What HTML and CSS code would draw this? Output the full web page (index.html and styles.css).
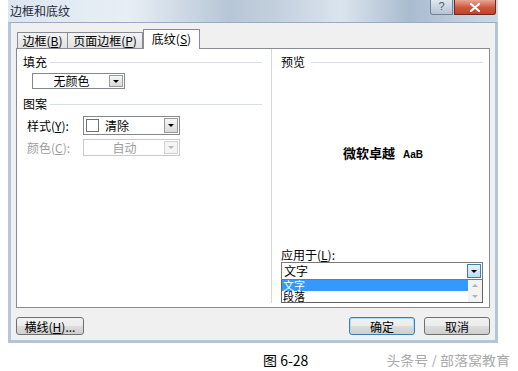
FILE: index.html
```html
<!DOCTYPE html>
<html lang="zh-CN">
<head>
  <meta charset="UTF-8" />
  <meta name="viewport" content="width=device-width, initial-scale=1.0"/>
  <title>边框和底纹</title>
  <link rel="stylesheet" href="styles.css">
</head>
<body>

  <div class="window">
    <!-- Title bar -->
    <div class="titlebar">
      <span class="title">边框和底纹</span>
      <div class="caption-btns">
        <span class="btn-help">?</span>
        <span class="btn-close">
          <svg width="12" height="9" viewBox="0 0 12 9">
            <path d="M2 1 L10 8 M10 1 L2 8" stroke="#fff" stroke-width="2.2" stroke-linecap="round"/>
          </svg>
        </span>
      </div>
    </div>

    <div class="dialog">
      <!-- Tabs -->
      <div class="tabs">
        <div class="tab tab-1">边框(<u>B</u>)</div>
        <div class="tab tab-2">页面边框(<u>P</u>)</div>
        <div class="tab tab-3 active">底纹(<u>S</u>)</div>
      </div>

      <div class="panel">
        <!-- Fill and pattern -->
        <div class="col-left">
          <div class="group-title"><span>填充</span><i class="rule"></i></div>
          <div class="combo fill-combo">
            <span class="value center">无颜色</span>
            <span class="arrow"><b></b></span>
          </div>

          <div class="group-title pattern-title"><span>图案</span><i class="rule"></i></div>
          <div class="field-row style-row">
            <span class="field-label">样式(<u>Y</u>):</span>
            <div class="combo style-combo">
              <span class="value"><i class="swatch"></i>清除</span>
              <span class="arrow"><b></b></span>
            </div>
          </div>
          <div class="field-row color-row disabled">
            <span class="field-label">颜色(<u>C</u>):</span>
            <div class="combo color-combo">
              <span class="value center">自动</span>
              <span class="arrow"><b></b></span>
            </div>
          </div>
        </div>

        <!-- Preview -->
        <div class="col-right">
          <div class="group-title"><span>预览</span><i class="rule preview-rule"></i></div>
          <div class="preview">
            <span class="sample">微软卓越<span class="latin">AaB</span></span>
          </div>
          <div class="apply-label">应用于(<u>L</u>):</div>
          <div class="combo apply-combo">
            <span class="value">文字</span>
            <span class="arrow hot"><b></b></span>
          </div>
          <div class="droplist">
            <div class="items">
              <div class="item sel">文字</div>
              <div class="item">段落</div>
            </div>
            <div class="scroll">
              <b class="up"></b>
              <b class="down"></b>
            </div>
          </div>
        </div>
      </div>

      <!-- Buttons -->
      <div class="footer">
        <button class="btn btn-rule">横线(<u>H</u>)...</button>
        <button class="btn btn-ok">确定</button>
        <button class="btn btn-cancel">取消</button>
      </div>
    </div>
  </div>

  <div class="caption">
    <span class="fig">图 6-28</span>
    <span class="watermark">头条号 / 部落窝教育</span>
  </div>

</body>
</html>
```

FILE: styles.css
```css
* {
  box-sizing: border-box;
}

body {
  margin: 0;
  background: #fff;
  font-family: "Noto Sans CJK SC", "Liberation Sans", sans-serif;
  font-size: 12px;
  color: #000;
}

u {
  text-decoration: underline;
}

.window {
  width: 490px;
  margin-left: 8px;
}

/* title bar */
.titlebar {
  height: 22px;
  display: flex;
  align-items: flex-start;
  padding-left: 2px;
  background: linear-gradient(90deg, #dde7f1 0%, #e7eef5 25%, #b7c6d6 45%, #c3d0de 55%, #dbe4ee 68%, #a9bbcf 82%, #bfcede 92%, #cbd8e6 100%);
}

.title {
  line-height: 22px;
  color: #1e2a38;
}

.caption-btns {
  margin-left: auto;
  margin-right: 2px;
  display: flex;
  gap: 1px;
}

.btn-help {
  width: 23px;
  height: 15px;
  border: 1px solid #6f829a;
  border-top: none;
  border-radius: 0 0 0 3px;
  background: linear-gradient(#dfe7f0, #b5c4d5);
  color: #4a5a6e;
  font-family: "Liberation Sans", sans-serif;
  font-size: 11px;
  line-height: 13px;
  text-align: center;
}

.btn-close {
  width: 42px;
  height: 15px;
  border: 1px solid #6e2a20;
  border-top: none;
  border-radius: 0 0 3px 0;
  background: linear-gradient(#e9a595, #cf553d 55%, #c3412a);
  display: flex;
  align-items: center;
  justify-content: center;
}

/* dialog body */
.dialog {
  background: #f0f0f0;
  border: 3px solid #b3c5d9;
  border-top: 1px solid #98adc4;
  padding: 6px 5px 5px 5px;
}

.tabs {
  display: flex;
  align-items: flex-end;
  height: 19px;
  margin-left: 1px;
}

.tab {
  height: 16px;
  border: 1px solid #898c95;
  border-bottom: none;
  background: linear-gradient(#f3f3f3, #e1e1e1);
  text-align: center;
  line-height: 15px;
  white-space: nowrap;
}

.tab-1 {
  width: 51px;
}

.tab-2 {
  width: 75px;
  border-left: none;
}

.tab-3 {
  width: 57px;
}

.tab.active {
  position: relative;
  z-index: 1;
  height: 20px;
  margin-bottom: -1px;
  background: #fff;
  line-height: 18px;
}

.panel {
  display: flex;
  align-items: flex-start;
  height: 260px;
  border: 1px solid #898c95;
  background: #fff;
}

.col-left {
  width: 249px;
  padding: 6px 4px 0 6px;
}

.col-right {
  flex: 1;
  margin-left: 5px;
  border-left: 1px solid #d3d9df;
  padding: 6px 6px 0 9px;
}

.group-title {
  display: flex;
  align-items: center;
  height: 14px;
  line-height: 14px;
}

.rule {
  flex: 1;
  height: 1px;
  margin-left: 3px;
  background: #d5dfe5;
}

.preview-rule {
  margin-left: 6px;
}

.pattern-title {
  margin-top: 8px;
}

/* combo boxes */
.combo {
  display: flex;
  border: 1px solid #828790;
  background: #fff;
}

.combo .value {
  flex: 1;
  display: flex;
  align-items: center;
  padding-left: 2px;
  line-height: 14px;
  white-space: nowrap;
}

.combo .value.center {
  justify-content: center;
}

.arrow {
  width: 14px;
  margin: 1px;
  border: 1px solid #9a9a9a;
  background: linear-gradient(#f6f6f6, #dadada);
  display: flex;
  align-items: center;
  justify-content: center;
}

.arrow b {
  border-left: 3px solid transparent;
  border-right: 3px solid transparent;
  border-top: 3px solid #000;
}

.arrow.hot {
  border-color: #3c7fb1;
  background: linear-gradient(#e6f3fc, #b9dcf5);
}

.fill-combo {
  width: 93px;
  height: 16px;
  margin: 4px 0 0 9px;
}

.field-row {
  display: flex;
  align-items: center;
  padding-left: 4px;
}

.field-label {
  width: 56px;
  white-space: nowrap;
}

.style-row {
  margin-top: 5px;
}

.style-combo {
  width: 97px;
  height: 19px;
}

.swatch {
  width: 13px;
  height: 13px;
  border: 1px solid #707070;
  margin-right: 6px;
}

.color-row {
  margin-top: 4px;
}

.color-combo {
  width: 97px;
  height: 17px;
  border-color: #c9c9c9;
}

.disabled .field-label,
.disabled .value {
  color: #9d9d9d;
}

.disabled .arrow {
  border-color: #d2d2d2;
  background: #f4f4f4;
}

.disabled .arrow b {
  border-top-color: #b4b4b4;
}

/* preview */
.preview {
  height: 170px;
  display: flex;
  align-items: center;
  justify-content: center;
  padding-left: 2px;
}

.sample {
  font-size: 13px;
  font-weight: bold;
  line-height: 16px;
}

.sample .latin {
  font-family: "Liberation Sans", sans-serif;
  font-size: 10px;
  margin-left: 8px;
}

.apply-label {
  margin-top: 9px;
  height: 14px;
  line-height: 14px;
}

.apply-combo {
  height: 18px;
  border-color: #7a7a7a;
}

.droplist {
  display: flex;
  height: 23px;
  border: 1px solid #646464;
  border-top: none;
  background: #fff;
}

.items {
  flex: 1;
}

.item {
  height: 11px;
  font-size: 11px;
  line-height: 11px;
  padding-left: 1px;
}

.item.sel {
  background: #3399ff;
  color: #fff;
}

.scroll {
  width: 14px;
  background: #f3f3f3;
  display: flex;
  flex-direction: column;
  align-items: center;
  justify-content: space-around;
}

.scroll .up {
  border-left: 3px solid transparent;
  border-right: 3px solid transparent;
  border-bottom: 3px solid #a7b5c2;
}

.scroll .down {
  border-left: 3px solid transparent;
  border-right: 3px solid transparent;
  border-top: 3px solid #a7b5c2;
}

/* footer buttons */
.footer {
  display: flex;
  margin-top: 9px;
}

.btn {
  height: 18px;
  padding: 0;
  border: 1px solid #707070;
  border-radius: 3px;
  background: linear-gradient(#f2f2f2, #ebebeb 50%, #dddddd 50%, #cfcfcf);
  font-family: inherit;
  font-size: 12px;
  line-height: 15px;
  color: #000;
}

.btn-rule {
  width: 68px;
}

.btn-ok {
  width: 66px;
  margin-left: auto;
  border-color: #3c7fb1;
  box-shadow: inset 0 0 0 1px #a9dbf6;
}

.btn-cancel {
  width: 66px;
  margin-left: 9px;
}

/* figure caption */
.caption {
  display: flex;
  padding: 10px 8px 0 263px;
  line-height: 14px;
}

.fig {
  font-size: 14px;
}

.watermark {
  margin-left: auto;
  font-size: 14px;
  color: #aaaaaa;
}
```
